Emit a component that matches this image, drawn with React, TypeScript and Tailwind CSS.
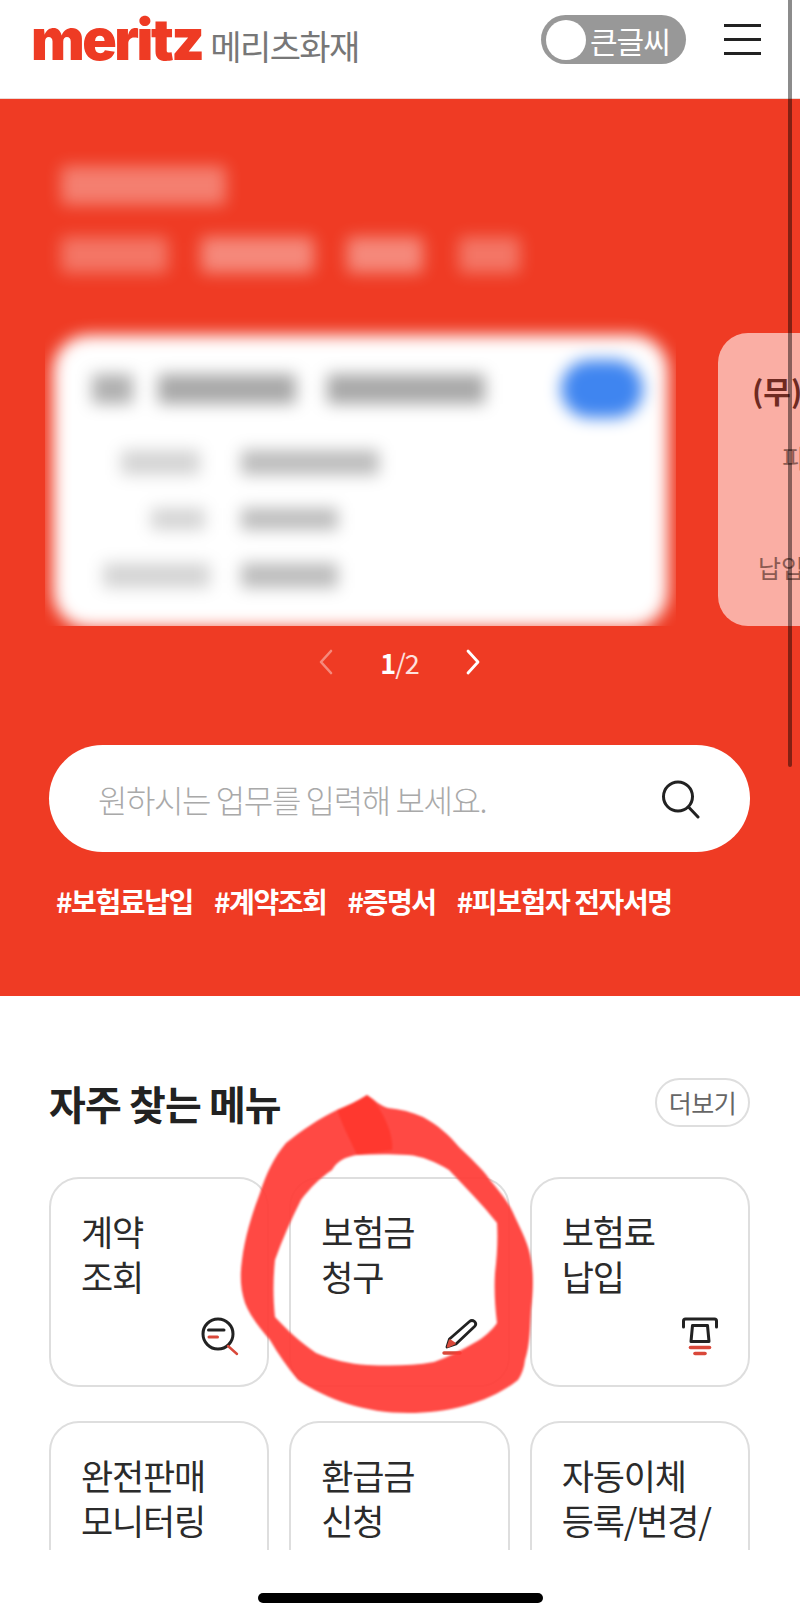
import React from "react";

const kr = "font-['Noto_Sans_CJK_KR','Noto_Sans',sans-serif]";

const SearchDocIcon = () => (
  <svg width="40" height="40" viewBox="0 0 40 40" fill="none" strokeLinecap="round">
    <circle cx="19" cy="18" r="15" stroke="#222" strokeWidth="3" />
    <path d="M9.5 14H25" stroke="#222" strokeWidth="3" />
    <path d="M10 21H18.5" stroke="#d9483a" strokeWidth="3" />
    <path d="M29 30L38 38" stroke="#d9483a" strokeWidth="2.4" />
  </svg>
);

const PenIcon = () => (
  <svg width="40" height="40" viewBox="0 0 40 40" fill="none" strokeLinecap="round" strokeLinejoin="round">
    <path d="M7 31L9.5 23L29.5 5.5C31 4.2 33 4.3 34.5 5.5C36 7 36 9 34.5 10.5L16 28Z" stroke="#222" strokeWidth="2.8" />
    <path d="M8 30.5L10 24.5L14.5 27.5Z" fill="#d9483a" stroke="#d9483a" strokeWidth="2.4" />
    <path d="M4 37H20" stroke="#d9483a" strokeWidth="3.4" />
  </svg>
);

const AtmIcon = () => (
  <svg width="40" height="40" viewBox="0 0 40 40" fill="none" strokeLinecap="round" strokeLinejoin="round">
    <path d="M3.5 11V5C3.5 3.8 4.3 3 5.5 3H34.5C35.7 3 36.5 3.8 36.5 5V11" stroke="#222" strokeWidth="3" />
    <path d="M12.5 9.5H27.5L29 25.5H11Z" stroke="#222" strokeWidth="3" />
    <path d="M10.5 31.5H29.5" stroke="#d9483a" strokeWidth="3.6" />
    <path d="M15 37.5H25" stroke="#d9483a" strokeWidth="3.6" />
  </svg>
);

const menus: { lines: string[]; icon?: React.ReactNode }[] = [
  { lines: ["계약", "조회"], icon: <SearchDocIcon /> },
  { lines: ["보험금", "청구"], icon: <PenIcon /> },
  { lines: ["보험료", "납입"], icon: <AtmIcon /> },
  { lines: ["완전판매", "모니터링"] },
  { lines: ["환급금", "신청"] },
  { lines: ["자동이체", "등록/변경/", "해지"] },
];

const MenuCard = ({ lines, icon }: { lines: string[]; icon?: React.ReactNode }) => (
  <div className="h-[210px] rounded-[30px] border-2 border-[#dedede] pl-[30px] pr-[28px] pt-[29px] pb-[29px] flex flex-col justify-between">
    <div className="text-[35px] leading-[45px] text-[#2b2b2b] tracking-[-1.2px]">
      {lines.map((l) => (
        <div key={l} className="whitespace-nowrap">{l}</div>
      ))}
    </div>
    {icon && <div className="self-end">{icon}</div>}
  </div>
);

const App: React.FC = () => {
  return (
    <div className={`relative w-[800px] h-[1620px] overflow-hidden bg-white flex flex-col ${kr}`}>
      {/* header */}
      <header className="h-[99px] shrink-0 flex items-start pl-[31px] pr-[39px] pt-[15px] border-b border-[#eadad6]">
        <div className="flex items-baseline h-[49px]">
          <span className="font-['Inter',sans-serif] font-black text-[57px] leading-[49px] tracking-[-2.5px] text-[#ee3b24]">
            meritz
          </span>
          <span className="ml-[8px] text-[34px] leading-[49px] tracking-[-1.6px] text-[#777]">메리츠화재</span>
        </div>
        <div className="ml-auto flex items-center h-[49px] w-[145px] rounded-full bg-[#989898] pl-[5px]">
          <span className="w-[40px] h-[40px] rounded-full bg-white" />
          <span className="ml-[4px] text-[30px] leading-none text-white tracking-[-1px]">큰글씨</span>
        </div>
        <div className="ml-[38px] w-[37px] flex flex-col gap-[11px] pt-[9px]">
          <span className="h-[3px] bg-[#222]" />
          <span className="h-[3px] bg-[#222]" />
          <span className="h-[3px] bg-[#222]" />
        </div>
      </header>

      {/* hero */}
      <section className="h-[897px] shrink-0 bg-[#ef3b24] flex flex-col overflow-hidden">
        <div className="flex items-end gap-[42px] pl-[45px] pt-[51px] h-[527px] shrink-0">
          <div className="w-[631px] h-[476px] shrink-0 overflow-hidden flex flex-col">
            <div className="pl-[16px] pt-[16px] h-[173px] shrink-0 flex flex-col gap-[32px] blur-[8px]">
              <div className="h-[39px] w-[165px] bg-white/35 rounded" />
              <div className="h-[36px] flex">
                <div className="w-[107px] bg-white/30 rounded" />
                <div className="ml-[33px] w-[113px] bg-white/40 rounded" />
                <div className="ml-[33px] w-[76px] bg-white/40 rounded" />
                <div className="ml-[36px] w-[61px] bg-white/30 rounded" />
              </div>
            </div>
            <div className="ml-[8px] mr-[8px] mt-[12px] h-[293px] shrink-0 bg-white rounded-[36px] blur-[8px]">
              <div className="flex items-center pl-[39px] pt-[24px] h-[84px]">
                <div className="w-[41px] h-[30px] bg-[#b0b0b0]" />
                <div className="ml-[25px] w-[138px] h-[30px] bg-[#a8a8a8]" />
                <div className="ml-[31px] w-[158px] h-[30px] bg-[#a8a8a8]" />
                <div className="ml-[76px] w-[82px] h-[58px] rounded-full bg-[#3f85f0]" />
              </div>
              <div className="mt-[31px] flex flex-col gap-[33px]">
                <div className="flex h-[25px]">
                  <div className="ml-[68px] w-[79px] bg-[#d4d4d4]" />
                  <div className="ml-[41px] w-[138px] bg-[#bcbcbc]" />
                </div>
                <div className="flex h-[22px]">
                  <div className="ml-[98px] w-[54px] bg-[#d4d4d4]" />
                  <div className="ml-[36px] w-[97px] bg-[#bcbcbc]" />
                </div>
                <div className="flex h-[25px]">
                  <div className="ml-[50px] w-[107px] bg-[#d4d4d4]" />
                  <div className="ml-[31px] w-[97px] bg-[#bcbcbc]" />
                </div>
              </div>
            </div>
          </div>
          <div className="w-[300px] h-[293px] shrink-0 rounded-[30px] bg-[#faaea4] pl-[34px] pt-[35px] whitespace-nowrap">
            <div className="text-[30px] font-bold leading-[44px] text-[#6f2a21]">(무)</div>
            <div className="mt-[29px] pl-[30px] text-[25px] leading-[32px] text-[#8c5a52]">피보험자</div>
            <div className="mt-[78px] pl-[6px] text-[25px] leading-[32px] text-[#8c5a52]">납입기간</div>
          </div>
        </div>

        {/* pager */}
        <div className="mt-[16px] h-[40px] shrink-0 flex items-center justify-center pr-[1px] text-white">
          <svg width="20" height="28" viewBox="0 0 20 28" fill="none" className="opacity-40">
            <path d="M15 3L5 14L15 25" stroke="#fff" strokeWidth="2.6" strokeLinecap="round" strokeLinejoin="round" />
          </svg>
          <div className="mx-[44px] text-[27px] leading-none tracking-[-1px]">
            <span className="font-bold">1</span>
            <span className="text-white/85">/2</span>
          </div>
          <svg width="20" height="28" viewBox="0 0 20 28" fill="none">
            <path d="M5 3L15 14L5 25" stroke="#fff" strokeWidth="2.8" strokeLinecap="round" strokeLinejoin="round" />
          </svg>
        </div>

        {/* search */}
        <div className="mt-[63px] ml-[49px] w-[701px] h-[107px] shrink-0 rounded-full bg-white flex items-center pl-[49px] pr-[50px]">
          <input
            readOnly
            placeholder="원하시는 업무를 입력해 보세요."
            className="flex-1 min-w-0 bg-transparent outline-none text-[32px] tracking-[-1.4px] font-light placeholder:text-[#a9a9a9]"
          />
          <svg width="40" height="40" viewBox="0 0 40 40" fill="none" strokeLinecap="round">
            <circle cx="18" cy="17.5" r="14.5" stroke="#222" strokeWidth="3" />
            <path d="M28.5 28L38 38" stroke="#222" strokeWidth="3" />
          </svg>
        </div>

        {/* tags */}
        <div className="mt-[31px] ml-[56px] flex gap-[21px] text-[28px] leading-[36px] font-bold text-white tracking-[-1.4px] whitespace-nowrap">
          <span>#보험료납입</span>
          <span>#계약조회</span>
          <span>#증명서</span>
          <span>#피보험자 전자서명</span>
        </div>
      </section>

      {/* frequent menus */}
      <main className="h-[554px] shrink-0 overflow-hidden pt-[82px] pl-[49px] pr-[50px]">
        <div className="flex items-center justify-between h-[49px]">
          <h2 className="text-[40px] font-bold text-[#222] tracking-[-0.9px] leading-none">자주 찾는 메뉴</h2>
          <div className="w-[95px] h-[49px] rounded-full border-2 border-[#dedede] flex items-center justify-center text-[25px] text-[#666] tracking-[-0.5px]">
            더보기
          </div>
        </div>
        <div className="mt-[50px] grid grid-cols-3 gap-x-[20px] gap-y-[34px]">
          {menus.map((m) => (
            <MenuCard key={m.lines[0]} lines={m.lines} icon={m.icon} />
          ))}
        </div>
      </main>

      {/* home indicator */}
      <div className="flex-1 flex justify-center pt-[43px]">
        <div className="w-[285px] h-[10px] rounded-full bg-black" />
      </div>

      {/* scroll thumb */}
      <div className="absolute right-[8px] top-0 w-[4px] h-[767px] rounded-b-full bg-black/45" />

      {/* hand drawn circle */}
      <svg className="absolute left-0 top-0 pointer-events-none blur-[1px]" width="800" height="1620" viewBox="0 0 800 1620">
        <path
          fillRule="evenodd"
          fill="#ff3a34"
          fillOpacity="0.92"
          d="M367 1095C375 1100 380 1106 388 1108C400 1109 412 1112 423 1117C438 1125 450 1136 459 1147C470 1158 482 1168 490 1180C500 1192 510 1204 515 1217C522 1232 529 1245 531 1260C534 1276 533 1293 531 1310C530 1328 530 1345 525 1360C524 1368 522 1374 518 1380C490 1402 450 1413 408 1413C365 1413 328 1400 298 1380C288 1368 278 1354 270 1340C260 1328 250 1316 245 1303C240 1288 240 1274 242 1260C245 1236 252 1214 260 1193C266 1174 274 1157 286 1143C302 1130 320 1118 337 1110C347 1106 358 1101 367 1095Z
             M357 1155C340 1158 336 1164 332 1170C320 1178 310 1188 301 1200C291 1220 282 1240 275 1260C273 1280 273 1298 275 1317C287 1330 300 1342 316 1353C332 1360 350 1364 367 1365C390 1366 412 1366 434 1362C448 1357 462 1350 474 1343C484 1338 492 1330 497 1323C495 1306 494 1290 495 1273C497 1256 498 1240 497 1223C482 1204 465 1187 449 1170C436 1162 422 1156 408 1155C392 1154 374 1154 357 1155Z"
        />
        <path fill="#ff3328" fillOpacity="0.75" d="M337 1110C347 1106 358 1101 367 1095C376 1101 386 1118 390 1132C392 1140 393 1146 392 1150L357 1155C350 1140 342 1124 337 1110Z" />
      </svg>
    </div>
  );
};

export default App;
